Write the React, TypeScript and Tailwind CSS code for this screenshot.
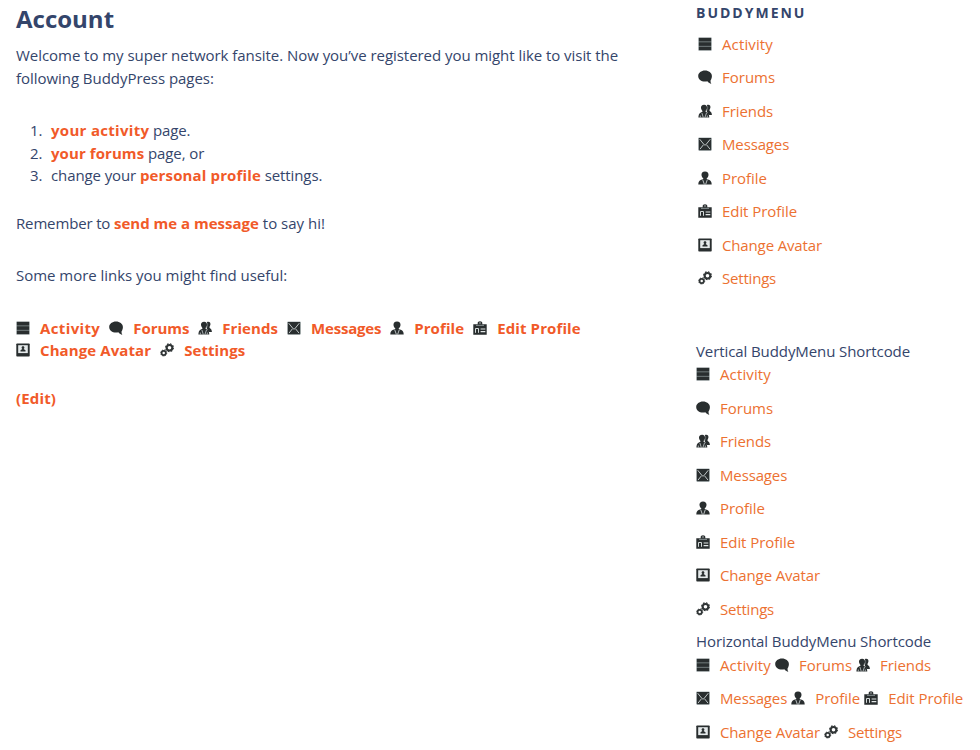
import React from "react";

type IconName =
  | "activity"
  | "forums"
  | "friends"
  | "messages"
  | "profile"
  | "edit"
  | "avatar"
  | "settings";

type Item = { icon: IconName; label: string; regular: string; bold: string };

const items: Item[] = [
  { icon: "activity", label: "Activity", regular: "tracking-[0.12px]", bold: "tracking-[0.37px]" },
  { icon: "forums", label: "Forums", regular: "tracking-[0px]", bold: "tracking-[-0.06px]" },
  { icon: "friends", label: "Friends", regular: "tracking-[-0.07px]", bold: "tracking-[0.07px]" },
  { icon: "messages", label: "Messages", regular: "tracking-[-0.14px]", bold: "tracking-[-0.2px]" },
  { icon: "profile", label: "Profile", regular: "tracking-[-0.03px]", bold: "tracking-[0.08px]" },
  { icon: "edit", label: "Edit Profile", regular: "tracking-[-0.06px]", bold: "tracking-[0.12px]" },
  { icon: "avatar", label: "Change Avatar", regular: "tracking-[-0.14px]", bold: "tracking-[0.1px]" },
  { icon: "settings", label: "Settings", regular: "tracking-[-0.2px]", bold: "tracking-[0.06px]" },
];

const drawings: Record<IconName, React.ReactNode> = {
  activity: (
    <>
      <rect x="0.4" y="0.6" width="13.2" height="13" fill="#a5b0b2" />
      <rect x="0.8" y="0.8" width="12.4" height="3.8" />
      <rect x="0.8" y="5.2" width="12.4" height="3.7" />
      <rect x="0.8" y="9.5" width="12.4" height="3.7" />
    </>
  ),
  forums: (
    <path d="M7 .5C3.200.5.2 2.900.2 6c0 3.200 2.900 5.600 6.800 5.600.9 0 1.700-.1 2.400-.3.900 1.300 2.200 2.200 4 2.400-.7-.9-1-2-.8-3.400.8-1.100 1.300-2.600 1.300-4.300C13.900 2.900 10.800.5 7 .5Z" />
  ),
  friends: (
    <>
      <path d="M9 1c2.300-.8 3.800.6 3.400 2.700-.2 1-.6 1.700-1 2.200l.3 1c1.400.7 2.200 2.200 2.200 4.100h-3.300L8.600 7Z" />
      <path d="M6.100.8C3.900.8 2.800 2.200 3 4.100c.1 1.200.7 2.200 1.400 2.800v.8l-2 1C1 9.500.5 11 .4 13.600h10.900c-.1-2.500-.6-4-2-4.900l-1.700-1v-.8C8.300 6.300 8.900 5.300 9 4.100 9.200 2.200 8.200.8 6.100.8Z" />
      <path d="m3.900 9 1.400 4.500M8.500 9l-1.600 4.500M2.300 11.500v2m7-2v2" stroke="#c9cfd0" strokeWidth=".8" fill="none" />
      <path d="M9.300 1.800c.7 1.400.4 3-.4 4.700" stroke="#b4bcbe" strokeWidth=".4" fill="none" />
    </>
  ),
  messages: (
    <>
      <rect x=".3" y=".4" width="13.400" height="13.300" rx=".8" fill="#a5b0b2" />
      <rect x=".8" y=".9" width="12.400" height="12.300" rx=".4" />
      <path d="m1.700 2.200 4.200 5.200c.7.800 1.500.8 2.200 0l4.200-5.200M2 12.100l3.600-4.500m6.400 4.500L8.400 7.600" stroke="#c6cecf" strokeWidth=".95" fill="none" />
    </>
  ),
  profile: (
    <>
      <path d="M7 .4C4.500.4 3.300 1.900 3.500 4c.1 1.600.8 2.700 1.800 3.400v.5L2.600 9.100C.9 9.900.4 11.200.3 13.500h13.400c-.1-2.300-.6-3.600-2.300-4.400L8.700 7.900v-.5c1-.7 1.700-1.800 1.800-3.400C10.700 1.900 9.500.4 7 .4Z" />
      <path d="m4.700 8.700 1.700 4.800m2.900-4.800-1.700 4.800" stroke="#c9cfd0" strokeWidth=".9" fill="none" />
    </>
  ),
  edit: (
    <>
      <path d="M4.700 3.200V2.100C4.700 1 5.600.3 7 .3s2.300.7 2.300 1.800v1.100h4.400v10.500H.3V3.200Z" />
      <circle cx="7" cy="2" r=".7" fill="#d8dddd" />
      <path d="M3 4.300h8" stroke="#a5b0b2" strokeWidth=".8" />
      <path d="M2.500 11.800V7.500h3V11.800" stroke="#d3d9d9" strokeWidth="1" fill="none" />
      <path d="M7.600 8h4.700m-4.700 2.600h4.700" stroke="#e4e8e8" strokeWidth="1.200" />
    </>
  ),
  avatar: (
    <>
      <rect x=".3" y=".5" width="13.400" height="13" rx=".7" />
      <rect x="2.200" y="2.200" width="9.600" height="7.900" fill="#e5eaeb" />
      <path d="M7 3.200c-1 0-1.500.7-1.400 1.500.1.600.4 1 .8 1.300L4.500 7.200v1.400h5V7.200L7.600 6c.4-.3.700-.7.800-1.300.1-.8-.4-1.500-1.400-1.500Z" />
    </>
  ),
  settings: (
    <g fill="none" stroke="#303536">
      <circle cx="9.500" cy="4.700" r="2.800" strokeWidth="2" />
      <circle cx="9.500" cy="4.700" r="3.900" strokeWidth="1.100" strokeDasharray="1.650 1.410" />
      <circle cx="3.700" cy="10" r="2.100" strokeWidth="1.700" />
      <circle cx="3.700" cy="10" r="3" strokeWidth="1" strokeDasharray="1.300 1.056" />
    </g>
  ),
};

function Icon({ name }: { name: IconName }) {
  return (
    <svg viewBox="0 0 14 14" className="h-[14px] w-[14px] shrink-0" fill="#292e2f" aria-hidden="true">
      {drawings[name]}
    </svg>
  );
}

function MenuLink({ item, bold = false }: { item: Item; bold?: boolean }) {
  return (
    <a href="#" className="flex items-center gap-[10px] whitespace-nowrap">
      <Icon name={item.icon} />
      <span className={bold ? item.bold : item.regular}>{item.label}</span>
    </a>
  );
}

function VerticalMenu() {
  return (
    <ul className="text-[#ec7131]">
      {items.map((item) => (
        <li key={item.label} className="h-[33.5px]">
          <MenuLink item={item} />
        </li>
      ))}
    </ul>
  );
}

function Strong({ children, className = "" }: { children: React.ReactNode; className?: string }) {
  return (
    <a href="#" className={`font-bold text-[#f15a29] ${className}`}>
      {children}
    </a>
  );
}

function Step({ number, children }: { number: number; children: React.ReactNode }) {
  return (
    <li className="flex">
      <span className="w-[21px] shrink-0">{number}.</span>
      <span>{children}</span>
    </li>
  );
}

export default function App() {
  return (
    <div className="flex h-[750px] w-[980px] overflow-hidden bg-white font-['Open_Sans',sans-serif] text-[15px] leading-[22.5px] text-[#34456b]">
      <main className="w-[680px] pl-4">
        <h1 className="pt-1 text-[24px] leading-[30px] font-bold">Account</h1>
        <p className="mt-[10px] w-[620px] tracking-[-0.045px]">
          Welcome to my super network fansite. Now you’ve registered you might like to visit the following BuddyPress
          pages:
        </p>
        <ol className="mt-[30px] pl-[14px]">
          <Step number={1}>
            <Strong className="tracking-[0.3px]">your activity</Strong>
            <span className="tracking-[-0.15px]"> page.</span>
          </Step>
          <Step number={2}>
            <Strong className="tracking-[0.08px]">your forums</Strong>
            <span className="tracking-[-0.1px]"> page, or</span>
          </Step>
          <Step number={3}>
            <span className="tracking-[-0.1px]">change your </span>
            <Strong className="tracking-[0.14px]">personal profile</Strong>
            <span className="tracking-[-0.1px]"> settings.</span>
          </Step>
        </ol>
        <p className="mt-[25px]">
          <span className="tracking-[-0.15px]">Remember to </span>
          <Strong>send me a message</Strong> to say hi!
        </p>
        <p className="mt-[30px] tracking-[-0.03px]">Some more links you might find useful:</p>
        <ul className="mt-[30px] flex w-[620px] flex-wrap gap-x-[9px] font-bold text-[#f15a29]">
          {items.map((item) => (
            <li key={item.label}>
              <MenuLink item={item} bold />
            </li>
          ))}
        </ul>
        <p className="mt-[25px]">
          <Strong className="tracking-[0.15px]">(Edit)</Strong>
        </p>
      </main>
      <aside className="w-[300px] pl-4">
        <h2 className="pt-[2px] text-[14px] font-bold tracking-[2px]">BUDDYMENU</h2>
        <div className="mt-2 pl-[2px]">
          <VerticalMenu />
        </div>
        <p className="mt-[39.5px] tracking-[-0.09px]">Vertical BuddyMenu Shortcode</p>
        <div className="mt-[0.5px]">
          <VerticalMenu />
        </div>
        <p className="mt-[-1px] mb-px tracking-[-0.07px]">Horizontal BuddyMenu Shortcode</p>
        <ul className="flex w-[276px] flex-wrap gap-x-1 text-[#ec7131]">
          {items.map((item) => (
            <li key={item.label} className="h-[33.5px]">
              <MenuLink item={item} />
            </li>
          ))}
        </ul>
      </aside>
    </div>
  );
}
